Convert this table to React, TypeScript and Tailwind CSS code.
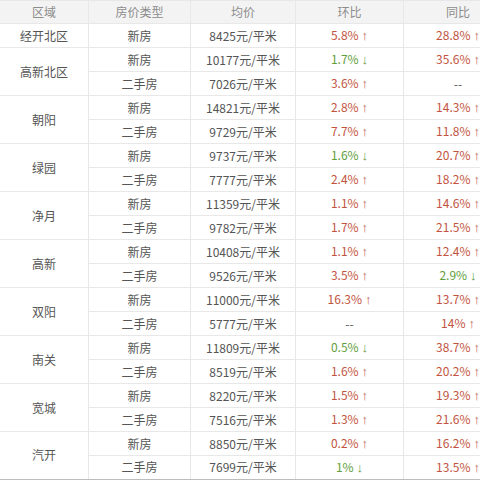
type Row = { area?: string; span?: number; kind: string; price: string; mom: string; yoy: string };

const rows: Row[] = [
  { area: "经开北区", span: 1, kind: "新房", price: "8425元/平米", mom: "5.8% ↑", yoy: "28.8% ↑" },
  { area: "高新北区", span: 2, kind: "新房", price: "10177元/平米", mom: "1.7% ↓", yoy: "35.6% ↑" },
  { kind: "二手房", price: "7026元/平米", mom: "3.6% ↑", yoy: "--" },
  { area: "朝阳", span: 2, kind: "新房", price: "14821元/平米", mom: "2.8% ↑", yoy: "14.3% ↑" },
  { kind: "二手房", price: "9729元/平米", mom: "7.7% ↑", yoy: "11.8% ↑" },
  { area: "绿园", span: 2, kind: "新房", price: "9737元/平米", mom: "1.6% ↓", yoy: "20.7% ↑" },
  { kind: "二手房", price: "7777元/平米", mom: "2.4% ↑", yoy: "18.2% ↑" },
  { area: "净月", span: 2, kind: "新房", price: "11359元/平米", mom: "1.1% ↑", yoy: "14.6% ↑" },
  { kind: "二手房", price: "9782元/平米", mom: "1.7% ↑", yoy: "21.5% ↑" },
  { area: "高新", span: 2, kind: "新房", price: "10408元/平米", mom: "1.1% ↑", yoy: "12.4% ↑" },
  { kind: "二手房", price: "9526元/平米", mom: "3.5% ↑", yoy: "2.9% ↓" },
  { area: "双阳", span: 2, kind: "新房", price: "11000元/平米", mom: "16.3% ↑", yoy: "13.7% ↑" },
  { kind: "二手房", price: "5777元/平米", mom: "--", yoy: "14% ↑" },
  { area: "南关", span: 2, kind: "新房", price: "11809元/平米", mom: "0.5% ↓", yoy: "38.7% ↑" },
  { kind: "二手房", price: "8519元/平米", mom: "1.6% ↑", yoy: "20.2% ↑" },
  { area: "宽城", span: 2, kind: "新房", price: "8220元/平米", mom: "1.5% ↑", yoy: "19.3% ↑" },
  { kind: "二手房", price: "7516元/平米", mom: "1.3% ↑", yoy: "21.6% ↑" },
  { area: "汽开", span: 2, kind: "新房", price: "8850元/平米", mom: "0.2% ↑", yoy: "16.2% ↑" },
  { kind: "二手房", price: "7699元/平米", mom: "1% ↓", yoy: "13.5% ↑" },
];

function tone(value: string) {
  if (value.endsWith("↑")) return "text-[#c2543f]";
  if (value.endsWith("↓")) return "text-[#5f9e3c]";
  return "text-[#555]";
}

// split off the arrow so it can use a thinner glyph
function Change({ value }: { value: string }) {
  const arrow = value.endsWith("↑") || value.endsWith("↓") ? value.slice(-1) : "";
  const text = arrow ? value.slice(0, -2) : value;
  return (
    <>
      {text}
      {arrow && <span className="ml-[3px] font-['Liberation_Sans',sans-serif] text-[13px]">{arrow}</span>}
    </>
  );
}

const cell = "border border-[#e8e8e8] text-center align-middle p-0";

export default function App() {
  return (
    <div className="w-[480px] h-[480px] overflow-hidden bg-white font-['Noto_Sans_CJK_SC','Microsoft_YaHei',sans-serif] text-[12px] leading-none">
      <table className="w-[513px] border-collapse table-fixed -ml-px border-b-2 border-b-[#bdbdbd]">
        <colgroup>
          <col className="w-[89px]" />
          <col className="w-[102px]" />
          <col className="w-[105px]" />
          <col className="w-[108px]" />
          <col className="w-[109px]" />
        </colgroup>
        <thead>
          <tr className="h-[23px] bg-[#f3f3f3] text-[#8c8c8c]">
            <th className={`${cell} font-normal`}>区域</th>
            <th className={`${cell} font-normal`}>房价类型</th>
            <th className={`${cell} font-normal`}>均价</th>
            <th className={`${cell} font-normal`}>环比</th>
            <th className={`${cell} font-normal`}>同比</th>
          </tr>
        </thead>
        <tbody className="text-[#555]">
          {rows.map((r, i) => (
            <tr key={i} className="h-[24px]">
              {r.area && (
                <td rowSpan={r.span} className={cell}>
                  {r.area}
                </td>
              )}
              <td className={cell}>{r.kind}</td>
              <td className={cell}>{r.price}</td>
              <td className={`${cell} ${tone(r.mom)}`}>
                <Change value={r.mom} />
              </td>
              <td className={`${cell} ${tone(r.yoy)}`}>
                <Change value={r.yoy} />
              </td>
            </tr>
          ))}
        </tbody>
      </table>
    </div>
  );
}
